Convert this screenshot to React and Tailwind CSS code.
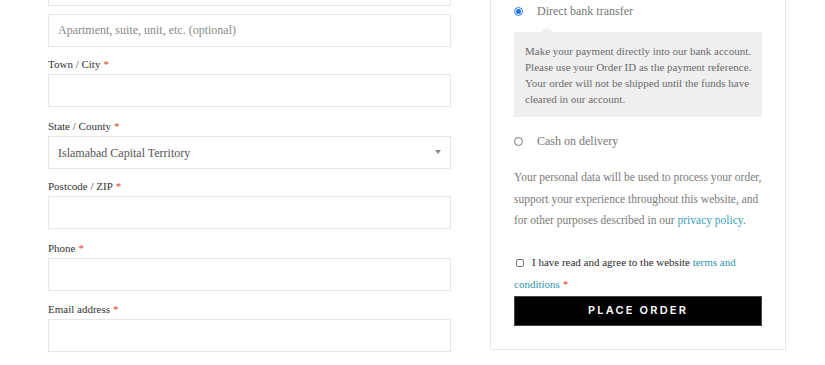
import React from "react";

const serif = { fontFamily: '"Liberation Serif", "DejaVu Serif", serif' };

function Req() {
  return <span className="text-[#e2401c] ml-[3px]">*</span>;
}

function Field({ label, children, className = "mt-[10px]" }) {
  return (
    <div className={className}>
      <label className="block text-[11px] leading-[18px] mb-px text-[#333]">
        {label}
        <Req />
      </label>
      {children}
    </div>
  );
}

function TextInput({ placeholder }) {
  return (
    <input
      type="text"
      placeholder={placeholder}
      className="block w-full h-[33px] border border-[#e6e6e6] bg-white px-[9px] text-[12px] text-[#555] placeholder:text-[#8a8a8a] outline-none"
      style={serif}
    />
  );
}

export default function App() {
  return (
    <div className="w-[825px] h-[365px] overflow-hidden bg-white" style={serif}>
      <div className="flex items-start pl-[48px]">
        {/* LEFT: billing fields */}
        <section className="w-[403px] -mt-[27px]">
          <TextInput />
          <div className="mt-[8px]">
            <TextInput placeholder="Apartment, suite, unit, etc. (optional)" />
          </div>
          <Field label="Town / City" className="mt-[8px]">
            <TextInput />
          </Field>
          <Field label="State / County">
            <div className="relative h-[33px] border border-[#e6e6e6] flex items-center px-[9px] text-[12px] text-[#555]">
              Islamabad Capital Territory
              <span className="absolute right-[9px] top-[13px] w-0 h-0 border-l-[3px] border-r-[3px] border-t-[4px] border-l-transparent border-r-transparent border-t-[#888]" />
            </div>
          </Field>
          <Field label="Postcode / ZIP" className="mt-[8px]">
            <TextInput />
          </Field>
          <Field label="Phone">
            <TextInput />
          </Field>
          <Field label="Email address" className="mt-[9px]">
            <TextInput />
          </Field>
        </section>

        {/* RIGHT: payment */}
        <section className="ml-[39px] w-[296px] border border-[#e8e8e8] -mt-[20px] px-[23px] pt-[21px] pb-[23px]">
          <div className="flex items-center h-[18px]">
            <span className="w-[9px] h-[9px] rounded-full border border-[#2f7ef5] flex items-center justify-center">
              <span className="w-[5px] h-[5px] rounded-full bg-[#1a73f0]" />
            </span>
            <span className="ml-[14px] text-[12px] text-[#777]">Direct bank transfer</span>
          </div>
          <div className="relative mt-[12px] bg-[#efefef] pt-[11px] pb-[10px] pl-[11px] pr-[8px] text-[11px] leading-[16px] text-[#6b6b6b]">
            <span className="absolute -top-[5px] left-[27px] w-0 h-0 border-l-[6px] border-r-[6px] border-b-[5px] border-l-transparent border-r-transparent border-b-[#efefef]" />
            Make your payment directly into our bank account. Please use your Order ID as the payment reference. Your order will not be shipped until the funds have cleared in our account.
          </div>
          <div className="flex items-center h-[18px] mt-[15px]">
            <span className="w-[9px] h-[9px] rounded-full border border-[#777]" />
            <span className="ml-[14px] text-[12px] text-[#777]">Cash on delivery</span>
          </div>
          <p className="mt-[17px] text-[11.5px] leading-[21.5px] text-[#7a7a7a]">
            Your personal data will be used to process your order, support your experience throughout this website, and for other purposes described in our{" "}
            <span className="text-[#3a9fb5]">privacy policy</span>.
          </p>
          <p className="mt-[19px] text-[11px] leading-[22px] text-[#2b2b2b]">
            <span className="inline-block align-[-1px] w-[8px] h-[8px] border border-[#777] rounded-[2px] ml-[2px] mr-[8px]" />
            I have read and agree to the website{" "}
            <span className="text-[#2f97b0]">terms and conditions</span>
            <Req />
          </p>
          <button
            className="mt-px w-full h-[30px] bg-black text-white text-[11px] font-semibold tracking-[0.2em] border border-[#444]"
            style={{ fontFamily: '"Inter", "Liberation Sans", sans-serif' }}
          >
            PLACE ORDER
          </button>
        </section>
      </div>
    </div>
  );
}
